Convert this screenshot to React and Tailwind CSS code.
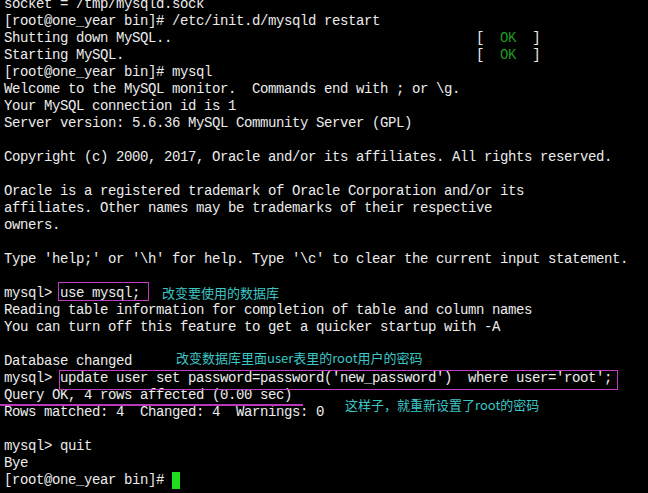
const lines = [
  'socket = /tmp/mysqld.sock',
  '[root@one_year bin]# /etc/init.d/mysqld restart',
  { text: 'Shutting down MySQL..', ok: true },
  { text: 'Starting MySQL.', ok: true },
  '[root@one_year bin]# mysql',
  'Welcome to the MySQL monitor.  Commands end with ; or \\g.',
  'Your MySQL connection id is 1',
  'Server version: 5.6.36 MySQL Community Server (GPL)',
  '',
  'Copyright (c) 2000, 2017, Oracle and/or its affiliates. All rights reserved.',
  '',
  'Oracle is a registered trademark of Oracle Corporation and/or its',
  'affiliates. Other names may be trademarks of their respective',
  'owners.',
  '',
  "Type 'help;' or '\\h' for help. Type '\\c' to clear the current input statement.",
  '',
  'mysql> use mysql;',
  'Reading table information for completion of table and column names',
  'You can turn off this feature to get a quicker startup with -A',
  '',
  'Database changed',
  "mysql> update user set password=password('new_password')  where user='root';",
  'Query OK, 4 rows affected (0.00 sec)',
  'Rows matched: 4  Changed: 4  Warnings: 0',
  '',
  'mysql> quit',
  'Bye',
  { text: '[root@one_year bin]# ', cursor: true },
];

function Line({ line }) {
  if (typeof line === 'string') {
    return <div className="h-[17px] leading-[17px] whitespace-pre">{line || ' '}</div>;
  }
  return (
    <div className="h-[17px] leading-[17px] whitespace-pre flex">
      <span>{line.ok ? line.text.padEnd(59, ' ') : line.text}</span>
      {line.ok && (
        <span>
          [  <span className="text-[#1f9a1f]">OK</span>  ]
        </span>
      )}
      {line.cursor && <span className="inline-block w-[8px] h-[17px] bg-[#1ee01e]" />}
    </div>
  );
}

export default function App() {
  return (
    <div className="relative w-[648px] h-[493px] overflow-hidden bg-black text-[#ececec]">
      <div className="-mt-[4px] pl-[4px] text-[14px] tracking-[-0.4px] font-['Liberation_Mono',monospace]">
        {lines.map((line, i) => (
          <Line key={i} line={line} />
        ))}
      </div>

      {/* annotations drawn over the terminal */}
      <div className="absolute left-[58px] top-[282px] w-[91px] h-[19px] border border-[#c23cc2]" />
      <div className="absolute left-[59px] top-[370px] w-[559px] h-[20px] border border-[#c23cc2]" />
      <div className="absolute left-0 top-[404px] w-[303px] h-[2px] bg-[#b838b8]" />

      <div className="absolute left-[162px] top-[284px] leading-[17px] text-[13px] text-[#3cc6c6] font-['Noto_Sans_CJK_SC',sans-serif] whitespace-nowrap">
        改变要使用的数据库
      </div>
      <div className="absolute left-[176px] top-[349px] leading-[17px] text-[13px] text-[#3cc6c6] font-['Noto_Sans_CJK_SC',sans-serif] whitespace-nowrap">
        改变数据库里面user表里的root用户的密码
      </div>
      <div className="absolute left-[345px] top-[396px] leading-[17px] text-[13px] text-[#3cc6c6] font-['Noto_Sans_CJK_SC',sans-serif] whitespace-nowrap">
        这样子，就重新设置了root的密码
      </div>
    </div>
  );
}
